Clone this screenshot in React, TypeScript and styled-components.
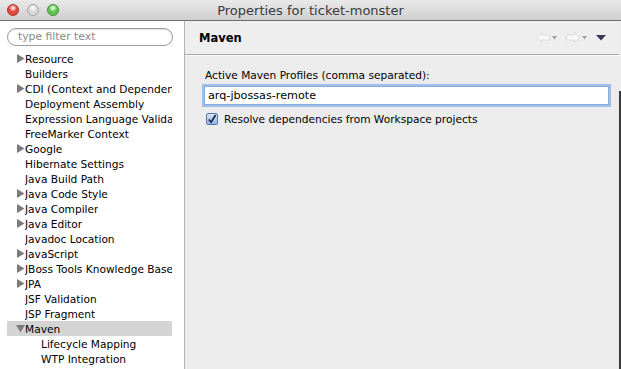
import React from 'react';
import styled, { createGlobalStyle } from 'styled-components';

const GlobalStyle = createGlobalStyle`
  html, body {
    margin: 0;
    padding: 0;
    background: #ececec;
  }
  body {
    font-family: "DejaVu Sans", "Lucida Grande", sans-serif;
    font-size: 10.6px;
    color: #000;
  }
`;

type TreeItem = { label: string; expander?: 'closed' | 'open'; child?: boolean; selected?: boolean };

const treeItems: TreeItem[] = [
  { label: 'Resource', expander: 'closed' },
  { label: 'Builders' },
  { label: 'CDI (Context and Dependency Injection) Settings', expander: 'closed' },
  { label: 'Deployment Assembly' },
  { label: 'Expression Language Validation' },
  { label: 'FreeMarker Context' },
  { label: 'Google', expander: 'closed' },
  { label: 'Hibernate Settings' },
  { label: 'Java Build Path' },
  { label: 'Java Code Style', expander: 'closed' },
  { label: 'Java Compiler', expander: 'closed' },
  { label: 'Java Editor', expander: 'closed' },
  { label: 'Javadoc Location' },
  { label: 'JavaScript', expander: 'closed' },
  { label: 'JBoss Tools Knowledge Base', expander: 'closed' },
  { label: 'JPA', expander: 'closed' },
  { label: 'JSF Validation' },
  { label: 'JSP Fragment' },
  { label: 'Maven', expander: 'open', selected: true },
  { label: 'Lifecycle Mapping', child: true },
  { label: 'WTP Integration', child: true },
];

const Expander: React.FC<{ open?: boolean }> = ({ open }) => (
  <ExpanderIcon width="9" height="9" viewBox="0 0 9 9">
    {open ? <polygon points="0,1 9,1 4.5,8.5" fill="#7b7b7b" /> : <polygon points="1,0 8.5,4.5 1,9" fill="#7b7b7b" />}
  </ExpanderIcon>
);

const NavArrow: React.FC<{ dir: 'left' | 'right' }> = ({ dir }) => (
  <svg width="14" height="11" viewBox="0 0 14 11">
    <polygon
      points={dir === 'left' ? '0.5,5.5 5.5,0.5 5.5,3 13.5,3 13.5,8 5.5,8 5.5,10.5' : '13.5,5.5 8.5,0.5 8.5,3 0.5,3 0.5,8 8.5,8 8.5,10.5'}
      fill="#f9f9f9"
      stroke="#dadada"
      strokeWidth="1"
    />
  </svg>
);

const SmallDrop: React.FC = () => (
  <svg width="5" height="4" viewBox="0 0 5 4">
    <polygon points="0,0 5,0 2.5,3.5" fill="#a0a0a0" />
  </svg>
);

const App: React.FC = () => {
  return (
    <>
      <GlobalStyle />
      <Window>
        <TitleBar>
          <Lights>
            <Light color="#e2493f" ring="#a8362f" />
            <Light color="#d8d8d8" ring="#a4a4a4" />
            <Light color="#5fc44f" ring="#3e8e33" />
          </Lights>
          <Title>Properties for ticket-monster</Title>
          <span />
        </TitleBar>
        <Body>
          <Sidebar>
            <Filter>type filter text</Filter>
            <Tree>
              {treeItems.map((item) => (
                <TreeRow key={item.label} selected={item.selected} child={item.child}>
                  <ExpanderSlot>{item.expander && <Expander open={item.expander === 'open'} />}</ExpanderSlot>
                  <TreeLabel>{item.label}</TreeLabel>
                </TreeRow>
              ))}
            </Tree>
          </Sidebar>
          <Main>
            <Header>
              <HeaderTitle>Maven</HeaderTitle>
              <NavGroup>
                <NavArrow dir="left" />
                <SmallDrop />
                <NavSpacer />
                <NavArrow dir="right" />
                <SmallDrop />
                <NavSpacer />
                <svg width="10" height="6" viewBox="0 0 10 6">
                  <polygon points="0,0 10,0 5,5.5" fill="#3b3456" />
                </svg>
              </NavGroup>
            </Header>
            <Content>
              <FieldLabel>Active Maven Profiles (comma separated):</FieldLabel>
              <TextInput>arq-jbossas-remote</TextInput>
              <CheckRow>
                <CheckBox>
                  <svg width="11" height="11" viewBox="0 0 11 11">
                    <path d="M2 5.5 L4.5 8.5 L9.5 0.5" fill="none" stroke="#1d1d3a" strokeWidth="1.8" />
                  </svg>
                </CheckBox>
                <span>Resolve dependencies from Workspace projects</span>
              </CheckRow>
            </Content>
          </Main>
          <Edge />
        </Body>
      </Window>
    </>
  );
};

const Window = styled.div`
  width: 621px;
  height: 369px;
  display: flex;
  flex-direction: column;
  overflow: hidden;
`;

const TitleBar = styled.div`
  height: 20px;
  flex: none;
  display: grid;
  grid-template-columns: 1fr auto 1fr;
  align-items: center;
  background: linear-gradient(#e9e9e9, #cfcfcf);
  border-bottom: 1px solid #6f6f6f;
`;

const Lights = styled.div`
  display: flex;
  gap: 8px;
  padding-left: 7px;
`;

const Light = styled.span<{ color: string; ring: string }>`
  width: 12px;
  height: 12px;
  border-radius: 50%;
  box-sizing: border-box;
  border: 1px solid ${(p) => p.ring};
  background: radial-gradient(circle at 50% 30%, #fff 0%, ${(p) => p.color} 45%, ${(p) => p.color} 100%);
`;

const Title = styled.div`
  font-size: 13px;
  color: #3a3a3a;
  padding-top: 1px;
`;

const Body = styled.div`
  flex: 1;
  display: flex;
  min-height: 0;
`;

const Sidebar = styled.div`
  width: 185px;
  flex: none;
  box-sizing: border-box;
  background: #fff;
  border-right: 1px solid #b4b4b4;
  padding: 7px 12px 0 7px;
  display: flex;
  flex-direction: column;
`;

const Filter = styled.div`
  height: 18px;
  box-sizing: border-box;
  width: 166px;
  border: 1px solid #9c9c9c;
  border-radius: 9px;
  box-shadow: inset 0 1px 1px rgba(0, 0, 0, 0.12);
  color: #8a8a8a;
  padding-left: 10px;
  line-height: 16px;
  font-size: 10.8px;
`;

const Tree = styled.div`
  margin-top: 5px;
  display: flex;
  flex-direction: column;
`;

const TreeRow = styled.div<{ selected?: boolean; child?: boolean }>`
  height: 15px;
  display: flex;
  align-items: center;
  padding-left: ${(p) => (p.child ? '25px' : '9px')};
  background: ${(p) => (p.selected ? '#d4d4d4' : 'transparent')};
  white-space: nowrap;
  overflow: hidden;
  font-size: 10.6px;
`;

const ExpanderSlot = styled.span`
  width: 9px;
  flex: none;
  display: flex;
  align-items: center;
`;

const ExpanderIcon = styled.svg`
  display: block;
`;

const TreeLabel = styled.span`
  overflow: hidden;
`;

const Main = styled.div`
  flex: 1;
  background: #ececec;
  display: flex;
  flex-direction: column;
`;

const Header = styled.div`
  height: 34px;
  flex: none;
  box-sizing: border-box;
  display: flex;
  align-items: center;
  justify-content: space-between;
  padding: 0 13px 0 14px;
  background: #eeeeee;
  border-bottom: 1px solid #a9a9a9;
  box-shadow: 0 1px 0 #fafafa;
`;

const HeaderTitle = styled.div`
  font-weight: bold;
  font-size: 11.5px;
`;

const NavGroup = styled.div`
  display: flex;
  align-items: center;
  gap: 2px;
`;

const NavSpacer = styled.span`
  width: 5px;
`;

const Content = styled.div`
  padding: 13px 9px 0 17px;
  display: flex;
  flex-direction: column;
`;

const FieldLabel = styled.div`
  padding-left: 3px;
  height: 15px;
  line-height: 15px;
`;

const TextInput = styled.div`
  margin-top: 3px;
  height: 19px;
  box-sizing: border-box;
  background: #fff;
  border: 1px solid #8aaee0;
  box-shadow: 0 0 0 2px #9ebfeb;
  margin-left: 2px;
  margin-right: 1px;
  padding-left: 3px;
  line-height: 17px;
  font-size: 11.2px;
`;

const CheckRow = styled.div`
  margin-top: 8px;
  display: flex;
  align-items: center;
  gap: 6px;
  padding-left: 4px;
`;

const CheckBox = styled.span`
  width: 12px;
  height: 12px;
  box-sizing: border-box;
  border: 1px solid #5a76a8;
  border-radius: 2px;
  background: linear-gradient(#d6e6fb, #8fb5ea);
  display: flex;
  align-items: center;
  justify-content: center;
`;

const Edge = styled.div`
  width: 2px;
  flex: none;
  background: linear-gradient(#ececec 0 20%, #3a3a3a 20% 100%);
`;

export default App;
